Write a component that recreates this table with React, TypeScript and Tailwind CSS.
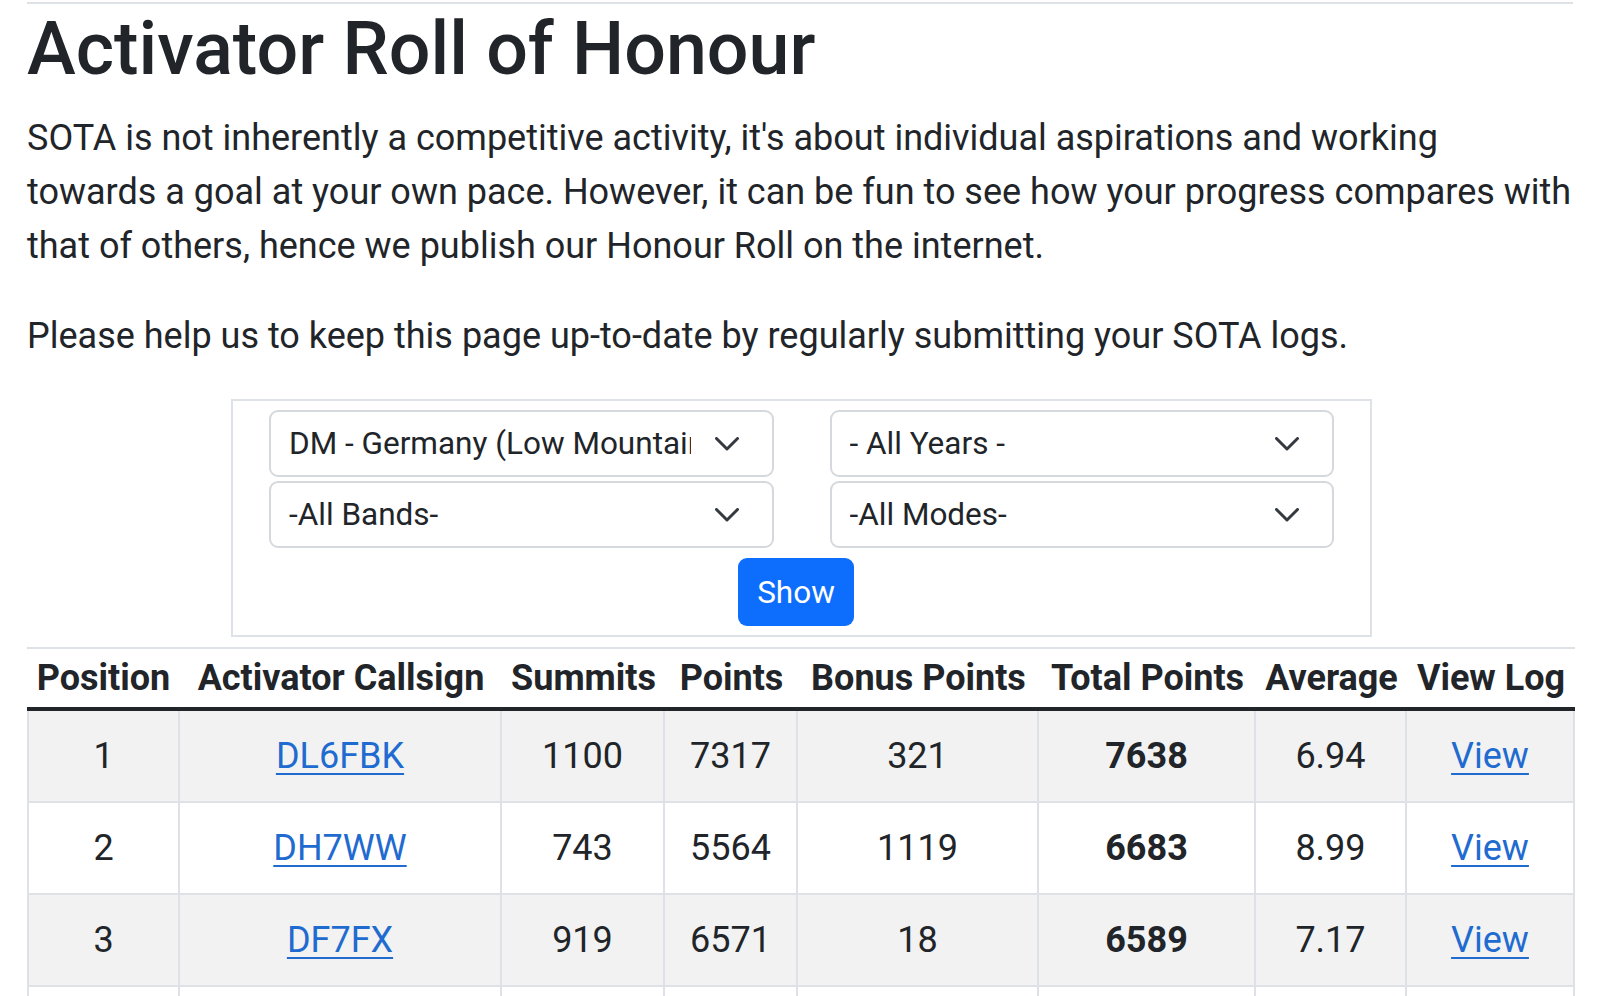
import React from "react";

const rows = [
  { pos: 1, call: "DL6FBK", summits: 1100, points: 7317, bonus: 321, total: 7638, avg: "6.94" },
  { pos: 2, call: "DH7WW", summits: 743, points: 5564, bonus: 1119, total: 6683, avg: "8.99" },
  { pos: 3, call: "DF7FX", summits: 919, points: 6571, bonus: 18, total: 6589, avg: "7.17" },
  { pos: 4, call: "DL1DVE", summits: 690, points: 5210, bonus: 980, total: 6190, avg: "8.97" },
];

function Chevron() {
  return (
    <svg width="24" height="14" viewBox="0 0 24 14" className="shrink-0">
      <path d="M1.5 1.5 L12 12 L22.5 1.5" fill="none" stroke="#343a40" strokeWidth="3" strokeLinecap="round" strokeLinejoin="round" />
    </svg>
  );
}

function Select({ label }: { label: string }) {
  return (
    <div className="flex h-[67px] items-center overflow-hidden rounded-[9px] border-2 border-[#d5d9dd] bg-white pl-[18px] pr-[33px]">
      <span className="mr-[24px] min-w-0 flex-1 overflow-hidden whitespace-nowrap text-[31.5px] leading-[47px]">{label}</span>
      <Chevron />
    </div>
  );
}

export default function App() {
  const th = "border-t-2 border-b-4 border-t-[#dee2e6] border-b-[#212529] px-[9px] pt-[2px] pb-[2px] text-center font-bold leading-[54px]";
  const td = "border-b-2 border-r-2 border-[#dee2e6] px-[9px] py-[18px] text-center leading-[54px]";
  const link = "text-[#1f6bd0] underline decoration-2 underline-offset-[5px]";
  return (
    <div
      className="min-h-screen bg-white px-[27px] text-[#212529]"
      style={{ fontFamily: "Roboto, 'Noto Sans', Arial, sans-serif" }}
    >
      <div className="pt-[2px]">
        <div className="border-t-2 border-[#dee2e6]" />
      </div>
      <h1 className="mt-[1px] mb-[18px] text-[73.5px] font-medium leading-[88px]">Activator Roll of Honour</h1>
      <p className="mb-[36px] text-[36px] leading-[54px]">
        SOTA is not inherently a competitive activity, it's about individual aspirations and working towards a goal at your own pace. However, it can be fun to see how your progress compares with that of others, hence we publish our Honour Roll on the internet.
      </p>
      <p className="mb-[36px] text-[36px] leading-[54px]">
        Please help us to keep this page up-to-date by regularly submitting your SOTA logs.
      </p>

      <div className="ml-[204px] w-[1141px] border-2 border-[#dee2e6] px-[36px] pt-[9px] pb-[9px]">
        <div className="grid grid-cols-2 gap-x-[56px] gap-y-[4px]">
          <Select label="DM - Germany (Low Mountains)" />
          <Select label="- All Years -" />
          <Select label="-All Bands-" />
          <Select label="-All Modes-" />
        </div>
        <div className="mt-[10px] flex justify-center pr-[11px]">
          <button className="h-[68px] w-[116px] rounded-[9px] bg-[#0d6efd] text-[31.5px] leading-[47px] text-white">
            Show
          </button>
        </div>
      </div>

      <table className="mt-[10px] w-[1548px] table-fixed border-separate border-spacing-0 text-[36px]">
        <colgroup>
          <col className="w-[153px]" />
          <col className="w-[322px]" />
          <col className="w-[163px]" />
          <col className="w-[133px]" />
          <col className="w-[241px]" />
          <col className="w-[217px]" />
          <col className="w-[151px]" />
          <col className="w-[168px]" />
        </colgroup>
        <thead>
          <tr>
            <th className={th}>Position</th>
            <th className={th}>Activator Callsign</th>
            <th className={th}>Summits</th>
            <th className={th}>Points</th>
            <th className={th}>Bonus Points</th>
            <th className={th}>Total Points</th>
            <th className={th}>Average</th>
            <th className={th}>View Log</th>
          </tr>
        </thead>
        <tbody>
          {rows.map((r, i) => (
            <tr key={r.pos} className={i % 2 === 0 ? "bg-[#f2f2f2]" : "bg-white"}>
              <td className={td + " border-l-2"}>{r.pos}</td>
              <td className={td}>
                <a href="#" className={link}>{r.call}</a>
              </td>
              <td className={td}>{r.summits}</td>
              <td className={td}>{r.points}</td>
              <td className={td}>{r.bonus}</td>
              <td className={td + " font-bold"}>{r.total}</td>
              <td className={td}>{r.avg}</td>
              <td className={td}>
                <a href="#" className={link}>View</a>
              </td>
            </tr>
          ))}
        </tbody>
      </table>
    </div>
  );
}
